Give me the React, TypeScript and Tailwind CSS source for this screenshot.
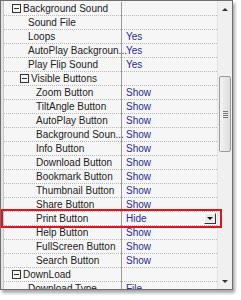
import React from "react";

type Row = {
  label: string;
  value?: string;
  level: number;
  category?: boolean;
  picked?: boolean;
};

const rows: Row[] = [
  { label: "Background Sound", level: 0, category: true },
  { label: "Sound File", level: 1 },
  { label: "Loops", value: "Yes", level: 1 },
  { label: "AutoPlay Backgroun...", value: "Yes", level: 1 },
  { label: "Play Flip Sound", value: "Yes", level: 1 },
  { label: "Visible Buttons", level: 1, category: true },
  { label: "Zoom Button", value: "Show", level: 2 },
  { label: "TiltAngle Button", value: "Show", level: 2 },
  { label: "AutoPlay Button", value: "Show", level: 2 },
  { label: "Background Soun...", value: "Show", level: 2 },
  { label: "Info Button", value: "Show", level: 2 },
  { label: "Download Button", value: "Show", level: 2 },
  { label: "Bookmark Button", value: "Show", level: 2 },
  { label: "Thumbnail Button", value: "Show", level: 2 },
  { label: "Share Button", value: "Show", level: 2 },
  { label: "Print Button", value: "Hide", level: 2, picked: true },
  { label: "Help Button", value: "Show", level: 2 },
  { label: "FullScreen Button", value: "Show", level: 2 },
  { label: "Search Button", value: "Show", level: 2 },
  { label: "DownLoad", level: 0, category: true },
  { label: "Download Type", value: "File", level: 1 },
];

const Minus = () => (
  <span className="w-[9px] h-[9px] border border-[#333] flex items-center justify-center mr-[2px] shrink-0">
    <span className="w-[5px] h-px bg-[#333]" />
  </span>
);

const PropRow = ({ row }: { row: Row }) => {
  const pad =
    row.category
      ? row.level === 0
        ? "pl-[8px]"
        : "pl-[16px]"
      : row.level === 1
        ? "pl-[24px]"
        : "pl-[32px]";

  return (
    <div className="relative flex h-[14px] shrink-0">
      <div
        className={`w-[117px] flex items-center border-b border-dotted border-[#b8b8b8] text-[#222] ${pad}`}
      >
        {row.category && <Minus />}
        <span className="whitespace-nowrap leading-none">{row.label}</span>
      </div>
      <div className="w-px bg-[#9a9a9a]" />
      <div className="flex-1 flex items-center pl-[4px] border-b border-dotted border-[#b8b8b8] text-[#2b2b96]">
        <span className="leading-none">{row.value}</span>
        {row.picked && (
          <span className="ml-auto mr-[1px] w-[12px] h-[11px] bg-[#ececec] border border-t-white border-l-white border-r-[#333] border-b-[#333] flex items-center justify-center">
            <span className="w-0 h-0 border-l-[3px] border-r-[3px] border-t-[3px] border-l-transparent border-r-transparent border-t-[#111]" />
          </span>
        )}
      </div>
      {/* red marker drawn over the row, reaching into the scrollbar */}
      {row.picked && (
        <span className="absolute z-10 left-[-3px] right-[-5px] top-[-3px] bottom-[-2px] border-2 border-[#e0141c]" />
      )}
    </div>
  );
};

export default function App() {
  return (
    <div
      className="w-[241px] h-[300px] bg-white"
      style={{ fontFamily: '"Liberation Sans", Arial, sans-serif' }}
    >
      <div className="w-[233px] h-[290px] flex border border-[#6e6e6e] bg-[#f6f6f6] text-[10px] overflow-hidden shadow-[2px_3px_3px_rgba(0,0,0,0.35)]">
        <div className="w-[3px] shrink-0 bg-[#e4e4e4] border-r border-[#c8c8c8]" />
        <div className="w-[213px] shrink-0 flex flex-col pt-px">
          {rows.map((row) => (
            <PropRow key={row.label} row={row} />
          ))}
        </div>
        <div className="flex-1 flex flex-col items-center bg-[#f0f0f0] border-l border-[#e2e2e2]">
          <div className="h-[16px] flex items-center justify-center">
            <span className="w-0 h-0 border-l-[3px] border-r-[3px] border-b-[3px] border-l-transparent border-r-transparent border-b-[#333]" />
          </div>
          <div className="mt-[59px] w-[12px] h-[76px] rounded-[2px] border border-[#9c9c9c] bg-gradient-to-r from-[#f4f4f4] to-[#dcdcdc] flex flex-col items-center justify-center gap-[1px]">
            <span className="w-[5px] h-px bg-[#777]" />
            <span className="w-[5px] h-px bg-[#777]" />
            <span className="w-[5px] h-px bg-[#777]" />
            <span className="w-[5px] h-px bg-[#777]" />
          </div>
          <div className="mt-auto h-[16px] flex items-center justify-center">
            <span className="w-0 h-0 border-l-[3px] border-r-[3px] border-t-[3px] border-l-transparent border-r-transparent border-t-[#333]" />
          </div>
        </div>
      </div>
    </div>
  );
}
